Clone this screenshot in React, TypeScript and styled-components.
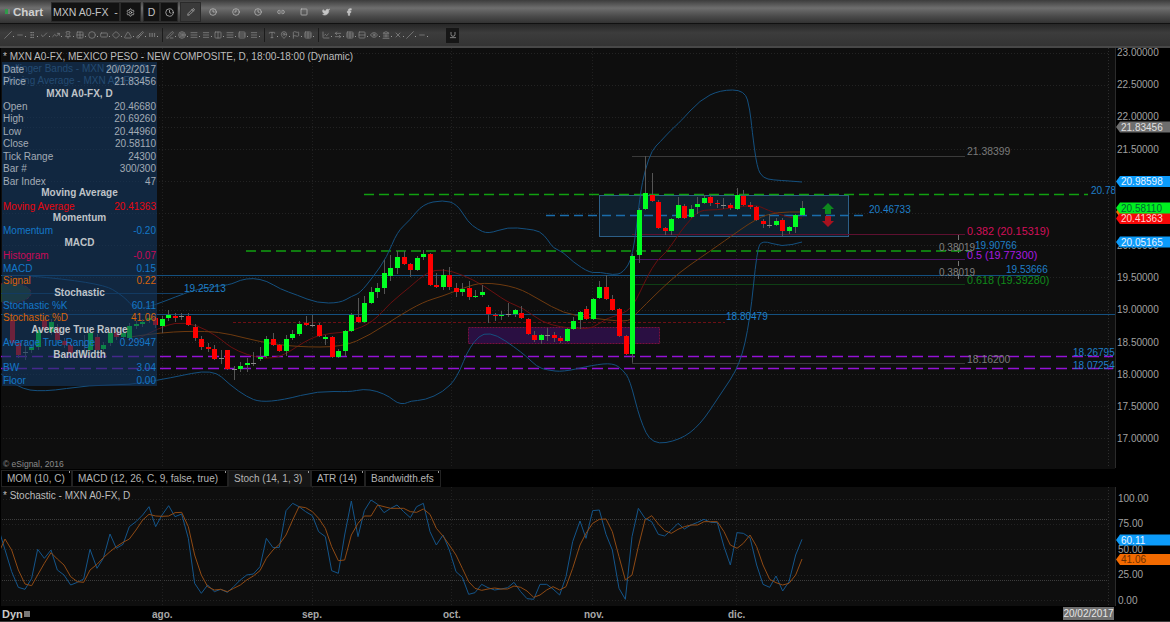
import React from "react";
import styled, { createGlobalStyle } from "styled-components";
import {
  Clock,
  Pencil,
  Settings,
  Clock3,
  Clock9,
  Link2,
  Square,
  Twitter,
  Facebook,
  Slash,
  Minus,
  Check,
  TrendingUp,
  Pin,
  Grid2x2,
  Circle,
  RectangleHorizontal,
  Diamond,
  Triangle,
  Brush,
  GripHorizontal,
  Target,
  AlignJustify,
  Menu,
  Columns2,
  Rows3,
  Type,
  MapPin,
  Flag,
  ChartLine,
  ArrowLeftRight,
  Table,
  Rows2,
  Eye,
  Landmark,
  X,
  PenLine,
  Underline,
  GripVertical,
} from "lucide-react";

const GlobalStyle = createGlobalStyle`
  html, body {
    margin: 0;
    padding: 0;
    background: #000;
  }
  body {
    font-family: "Liberation Sans", Arial, sans-serif;
  }
`;

const Window = styled.div`
  width: 1170px;
  height: 622px;
  overflow: hidden;
  display: flex;
  flex-direction: column;
  background: #000;
  color: #bbb;
`;

const TitleBar = styled.div`
  height: 23px;
  flex: none;
  display: flex;
  align-items: center;
  background: linear-gradient(#3c3c3c 0, #6e6e6e 35%, #4b4b4b 70%, #333 100%);
`;

const Led = styled.span`
  width: 3px;
  height: 5px;
  margin: 0 3px 0 5px;
  background: #2f9a4a;
  box-shadow: 2px 0 0 #777;
`;

const AppName = styled.span`
  width: 36px;
  margin-left: 2px;
  font-size: 11.5px;
  font-weight: bold;
  color: #cfcfcf;
`;

const TitleBox = styled.div<{ $w: number; $ml?: number; $light?: boolean }>`
  width: ${(p) => p.$w}px;
  height: 20px;
  flex: none;
  margin: 1px 0 0 ${(p) => p.$ml || 0}px;
  display: flex;
  align-items: center;
  justify-content: center;
  font-size: 10.5px;
  white-space: nowrap;
  color: #c4c4c4;
  background: ${(p) => (p.$light ? "#3a3a3a" : "#121212")};
  border: 1px solid #2a2a2a;
  box-sizing: border-box;
`;

const TitleIcons = styled.div`
  display: flex;
  align-items: center;
  gap: 14.7px;
  margin-left: 8px;
  color: #c6c6c6;
`;

const ToolBar = styled.div`
  height: 22px;
  flex: none;
  display: flex;
  align-items: center;
  padding-left: 4px;
  background: linear-gradient(#262626, #3c3c3c 40%, #333);
  border-top: 1px solid #111;
  border-bottom: 2px solid #484848;
  box-sizing: content-box;
  color: #8e8e8e;
`;

const ToolItem = styled.span`
  width: 12px;
  flex: none;
  display: flex;
  align-items: center;
  &::after {
    content: "";
    width: 1px;
    height: 1px;
    margin: 3px 0 0 1px;
    background: #999;
  }
`;

const ToolSep = styled.span`
  width: 1px;
  height: 14px;
  margin: 0 3px 0 2px;
  flex: none;
  background: #1c1c1c;
`;

const UnderlineBox = styled.span`
  width: 13px;
  height: 15px;
  margin-left: 16px;
  display: flex;
  align-items: center;
  justify-content: center;
  background: #161616;
  color: #bbb;
`;

const ChartRow = styled.div<{ $h: number }>`
  height: ${(p) => p.$h}px;
  flex: none;
  display: flex;
`;

const Pane = styled.div`
  position: relative;
  width: 1114px;
  flex: none;
  margin-left: 1px;
  background: #0e0e0e;
  overflow: hidden;
`;

const ChartSvg = styled.svg`
  position: absolute;
  left: -1px;
  top: 0;
  display: block;
`;

const Axis = styled.svg`
  width: 55px;
  flex: none;
  display: block;
  border-left: 1px solid #2b2b2b;
  box-sizing: content-box;
`;

const PaneTitle = styled.div`
  position: relative;
  padding: 3px 0 0 2px;
  height: 12px;
  line-height: 12px;
  font-size: 10px;
  white-space: nowrap;
  color: #bdbdbd;
`;

const LegendLine = styled.div`
  position: relative;
  padding-left: 2px;
  height: 12px;
  line-height: 12px;
  font-size: 10px;
  white-space: nowrap;
  color: #3f6b90;
`;

const Legend = styled.div`
  padding-top: 0;
`;

const Copyright = styled.div`
  position: absolute;
  left: 2px;
  bottom: 0;
  font-size: 8.5px;
  color: #8a8a8a;
`;

const DataWindow = styled.div`
  position: absolute;
  left: 1px;
  top: 14px;
  width: 155px;
  height: 324px;
  display: grid;
  grid-auto-rows: 12.45px;
  padding: 1px 1px 0;
  box-sizing: border-box;
  background: rgba(20, 55, 95, 0.62);
  font-size: 10px;
`;

const DataRow = styled.div<{ $c?: string }>`
  display: flex;
  justify-content: space-between;
  align-items: center;
  color: ${(p) => p.$c || "#a3abb5"};
  white-space: nowrap;
`;

const DataHead = styled.div`
  text-align: center;
  font-weight: bold;
  line-height: 12.45px;
  color: #bfc3c8;
  white-space: nowrap;
`;

const Tabs = styled.div`
  height: 17px;
  flex: none;
  display: flex;
  margin: 1px 0 0 1px;
`;

const Tab = styled.div<{ $w: number; $active?: boolean }>`
  position: relative;
  width: ${(p) => p.$w}px;
  box-sizing: border-box;
  padding-left: 5px;
  line-height: 15px;
  font-size: 10px;
  white-space: nowrap;
  color: #b4b4b4;
  background: ${(p) => (p.$active ? "#161616" : "#000")};
  border: 1px solid #222;
  border-bottom-color: ${(p) => (p.$active ? "#161616" : "#222")};
  &::after {
    content: "";
    position: absolute;
    right: 1px;
    top: 0;
    width: 1px;
    height: 2px;
    background: #999;
  }
`;

const TimeAxis = styled.div`
  flex: none;
  height: 14px;
  margin-top: 1px;
  display: flex;
  align-items: center;
  position: relative;
  font-size: 10px;
  font-weight: bold;
  color: #a8a8a8;
  border-bottom: 1px solid #3a3a3a;
`;

const Dyn = styled.span`
  margin-left: 2px;
  font-size: 11px;
  color: #c8c8c8;
`;

const DynMark = styled.span`
  width: 6px;
  height: 6px;
  margin-left: 1px;
  background: #777;
`;

const Month = styled.span<{ $x: number }>`
  position: absolute;
  left: ${(p) => p.$x}px;
`;

const DateTag = styled.span`
  position: absolute;
  left: 1063px;
  top: 0;
  width: 51px;
  height: 13px;
  line-height: 13px;
  text-align: center;
  font-size: 10px;
  font-weight: normal;
  color: #e6e6e6;
  background: #6f6f6f;
`;

const T = styled.text<{ $c: string; $s?: number; $b?: boolean }>`
  font-family: "Liberation Sans", Arial, sans-serif;
  font-size: ${(p) => p.$s || 10}px;
  font-weight: ${(p) => (p.$b ? "bold" : "normal")};
  fill: ${(p) => p.$c};
`;

// [kind, top, bottom, wickTop, wickBottom], one entry per day, 6.53px apart
type Candle = [string, number, number, number?, number?];
const candles: Candle[] = [
  ["r", 320, 343], ["r", 343, 355], ["d", 352, 353, 340, 360], ["g", 347, 350], ["g", 330, 347], ["r", 320, 330],
  ["g", 322, 332], ["r", 327, 340], ["r", 341, 345], ["r", 345, 353], ["d", 352, 353], ["d", 345, 346, 335, 355],
  ["g", 333, 350], ["r", 337, 350], ["g", 345, 349], ["g", 333, 343], ["r", 332, 337], ["g", 333, 337],
  ["g", 326, 338], ["g", 324, 326], ["g", 322, 324], ["g", 318, 320], ["r", 318, 325], ["g", 319, 326, 316, 333],
  ["g", 315, 318, 310, 321], ["r", 316, 318, 313, 322], ["d", 316, 317, 313, 320], ["r", 316, 325, 313, 326], ["r", 327, 338], ["r", 339, 347],
  ["r", 347, 349, 343, 352], ["r", 349, 359, 345, 360], ["d", 358, 359, 350, 364], ["r", 350, 369, 350, 370], ["d", 369, 370, 366, 380], ["g", 366, 369, 362, 372],
  ["g", 363, 365, 358, 372], ["d", 363, 364, 352, 366], ["g", 357, 359, 347, 361], ["g", 339, 356, 336, 358], ["r", 339, 345, 333, 346], ["r", 345, 351, 344, 352],
  ["g", 339, 351, 335, 356], ["g", 334, 338, 330, 340], ["g", 324, 334, 321, 336], ["r", 323, 325, 316, 326], ["d", 325, 326, 315, 327], ["r", 325, 336, 323, 337],
  ["g", 337, 339, 335, 345], ["r", 337, 357, 336, 358], ["g", 351, 357, 349, 358], ["g", 331, 351, 330, 356], ["g", 315, 331, 313, 332], ["r", 317, 322, 298, 323],
  ["g", 303, 322, 296, 323], ["g", 292, 303, 287, 304], ["g", 288, 292, 283, 298], ["g", 273, 288, 260, 294], ["g", 268, 276, 255, 281], ["g", 257, 268, 251, 274],
  ["r", 257, 264, 251, 265], ["r", 264, 270, 263, 277], ["g", 258, 270, 256, 271], ["g", 254, 257, 250, 260], ["r", 254, 285, 253, 286], ["r", 285, 287, 273, 288],
  ["g", 275, 287, 269, 290], ["r", 275, 287, 267, 290], ["r", 288, 292, 283, 297], ["g", 289, 292, 283, 296], ["r", 288, 297, 281, 300], ["g", 296, 297, 290, 298],
  ["g", 292, 295, 285, 297], ["r", 307, 314, 305, 323], ["r", 315, 316, 313, 321], ["g", 315, 316, 311, 320], ["d", 314, 315, 303, 317], ["g", 310, 314, 309, 317],
  ["r", 313, 318, 306, 319], ["r", 319, 334, 318, 335], ["r", 335, 340, 331, 342], ["g", 335, 340, 334, 344], ["d", 335, 336, 328, 341], ["r", 335, 338, 332, 342],
  ["r", 338, 341, 336, 343], ["g", 329, 341, 328, 342], ["g", 321, 329, 317, 330], ["g", 312, 320, 311, 329], ["r", 309, 319, 306, 320], ["g", 299, 319, 298, 320],
  ["g", 287, 298, 281, 299], ["r", 287, 299, 275, 300], ["r", 299, 310, 295, 311], ["r", 309, 336, 308, 337], ["r", 336, 354, 335, 355], ["g", 256, 354, 254, 362],
  ["g", 210, 255, 208, 263], ["g", 193, 209, 156, 210], ["r", 195, 201, 173, 202], ["r", 202, 228, 200, 229], ["r", 228, 231, 227, 235], ["g", 219, 231, 218, 235],
  ["g", 205, 218, 197, 219], ["r", 206, 218, 204, 219], ["g", 209, 217, 205, 218], ["g", 204, 207, 197, 214], ["g", 198, 203, 195, 204], ["r", 197, 203, 195, 206],
  ["r", 203, 204, 200, 208], ["d", 205, 206, 198, 209], ["r", 205, 208, 203, 210], ["g", 195, 209, 188, 210], ["r", 196, 205, 190, 206], ["r", 205, 207, 202, 209],
  ["r", 207, 220, 206, 221], ["r", 221, 224, 219, 228], ["d", 225, 226, 214, 228], ["g", 221, 225, 218, 226], ["r", 220, 231, 218, 236], ["g", 227, 231, 226, 234],
  ["g", 215, 227, 214, 233], ["g", 208, 215, 201, 216],
];

const pts = (list: number[][]) => list.map((p) => p.join(",")).join(" ");

// rounds the corners of a hand-read line through midpoints
const smooth = (list: number[][]) => {
  let d = `M${list[0][0]} ${list[0][1]}`;
  for (let i = 1; i < list.length - 1; i++) {
    const [x, y] = list[i];
    const [nx, ny] = list[i + 1];
    d += ` Q${x} ${y} ${(x + nx) / 2} ${(y + ny) / 2}`;
  }
  const last = list[list.length - 1];
  return `${d} L${last[0]} ${last[1]}`;
};

const upperBand = [
  [30, 276], [100, 282], [125, 297], [135, 310], [155, 305], [175, 297], [200, 288], [230, 285], [240, 280], [253, 278], [267, 281], [280, 289], [297, 295], [317, 303], [340, 303], [352, 296], [360, 293], [373, 277], [387, 257], [397, 232], [410, 220], [423, 204], [443, 200], [457, 204], [468, 222], [477, 229], [488, 234], [508, 227], [527, 229], [540, 231], [548, 240], [553, 248], [563, 252], [573, 262], [590, 273], [600, 272], [613, 275], [623, 273], [633, 257], [640, 195], [645, 170], [652, 150], [660, 142], [671, 130], [680, 122], [700, 100], [720, 90], [745, 90], [750, 110], [752, 130], [757, 168], [763, 178], [773, 180], [790, 181], [802, 182],
];
const lowerBand = [
  [0, 373], [17, 388], [43, 392], [90, 385], [130, 385], [170, 378], [213, 369], [230, 385], [247, 397], [260, 402], [283, 400], [318, 391], [350, 392], [363, 389], [377, 391], [390, 397], [397, 403], [405, 404], [410, 401], [425, 400], [443, 392], [457, 378], [470, 345], [488, 329], [523, 353], [537, 367], [547, 370], [563, 372], [593, 365], [613, 363], [623, 370], [630, 380], [640, 420], [652, 445], [680, 440], [700, 425], [720, 395], [740, 365], [750, 320], [757, 250], [762, 240], [782, 247], [802, 242],
];
const maLine = [
  [130, 343], [163, 325], [187, 322], [207, 330], [222, 340], [230, 347], [247, 355], [267, 359], [283, 356], [310, 338], [330, 333], [350, 332], [373, 322], [390, 303], [410, 287], [427, 272], [443, 269], [463, 275], [483, 285], [507, 302], [523, 308], [542, 322], [560, 327], [580, 329], [593, 328], [607, 318], [620, 315], [633, 307], [647, 277], [657, 260], [667, 252], [680, 232], [690, 220], [700, 210], [717, 210], [737, 207], [757, 205], [767, 210], [790, 218], [802, 218],
];
const slowLine = [
  [130, 337], [163, 332], [207, 331], [230, 334], [260, 342], [297, 347], [343, 347], [370, 335], [397, 317], [423, 302], [443, 296], [463, 288], [483, 282], [517, 287], [540, 300], [563, 313], [590, 318], [627, 322], [633, 317], [660, 290], [680, 272], [700, 258], [723, 242], [757, 218], [777, 212], [802, 212],
];

// stochastic traces, read off in two stretches
const fromLeft = (l: number[][]) => l.map(([x, y]) => [x / 3, 455 + y / 3]);
const fromRight = (l: number[][]) => l.map(([x, y]) => [450 + x / 3, 490 + y / 3]);
const stochK = [
  ...fromLeft([[0, 235], [35, 350], [55, 397], [75, 403], [95, 370], [113, 283], [133, 310], [153, 285], [172, 345], [192, 360], [212, 390], [232, 382], [251, 372], [270, 283], [291, 340], [310, 310], [330, 237], [349, 280], [369, 268], [388, 215], [408, 200], [428, 180], [447, 155], [467, 215], [486, 180], [506, 152], [525, 185], [545, 177], [565, 250], [584, 385], [604, 415], [623, 390], [643, 410], [662, 403], [682, 412], [701, 395], [721, 375], [740, 360], [760, 357], [780, 335], [799, 250], [819, 278], [838, 277], [858, 167], [878, 145], [897, 155], [917, 170], [937, 182], [956, 230], [976, 245], [995, 347], [1015, 355], [1034, 240], [1054, 138], [1074, 245], [1093, 167], [1113, 135], [1133, 148], [1152, 173], [1172, 160], [1191, 150], [1211, 170], [1231, 188], [1250, 155], [1270, 145], [1290, 230], [1309, 270], [1329, 240], [1348, 285], [1368, 350]]),
  ...fromRight([[18, 245], [37, 262], [56, 313], [75, 308], [95, 283], [114, 293], [134, 300], [153, 297], [173, 293], [192, 277], [212, 305], [231, 326], [251, 328], [270, 283], [290, 283], [309, 297], [329, 315], [348, 260], [368, 155], [390, 93], [408, 145], [428, 62], [448, 60], [468, 133], [487, 180], [507, 295], [526, 328], [546, 140], [565, 55], [585, 85], [605, 95], [625, 133], [644, 138], [664, 120], [684, 100], [703, 117], [723, 105], [743, 97], [762, 88], [782, 97], [802, 98], [822, 170], [841, 225], [861, 128], [880, 130], [900, 143], [920, 225], [939, 283], [959, 292], [978, 258], [998, 303], [1017, 275], [1037, 195], [1056, 148]]),
];
const stochD = [
  ...fromLeft([[0, 285], [15, 252], [35, 285], [55, 345], [75, 387], [95, 392], [113, 360], [133, 325], [153, 293], [172, 312], [192, 330], [212, 365], [232, 380], [251, 382], [270, 345], [291, 328], [310, 308], [330, 290], [349, 275], [369, 262], [388, 252], [408, 225], [428, 195], [447, 178], [467, 183], [486, 184], [506, 183], [525, 173], [545, 172], [565, 215], [584, 300], [604, 360], [623, 395], [643, 405], [662, 403], [682, 410], [701, 400], [721, 390], [740, 375], [760, 363], [780, 347], [799, 310], [819, 285], [838, 268], [858, 240], [878, 195], [897, 155], [917, 158], [937, 170], [956, 190], [976, 220], [995, 275], [1015, 317], [1034, 315], [1054, 240], [1074, 205], [1093, 183], [1113, 183], [1133, 150], [1152, 155], [1172, 160], [1191, 160], [1211, 160], [1231, 170], [1250, 172], [1270, 162], [1290, 178], [1309, 220], [1329, 243], [1348, 270], [1368, 300]]),
  ...fromRight([[18, 195], [37, 235], [56, 275], [75, 295], [95, 301], [114, 297], [134, 294], [153, 297], [173, 297], [192, 288], [212, 292], [231, 303], [251, 322], [270, 315], [290, 300], [309, 290], [329, 300], [348, 290], [368, 235], [390, 165], [408, 130], [428, 100], [448, 88], [468, 87], [487, 125], [507, 200], [526, 270], [546, 255], [565, 170], [585, 90], [605, 77], [625, 102], [644, 122], [664, 130], [684, 118], [703, 110], [723, 105], [743, 105], [762, 95], [782, 95], [802, 95], [822, 125], [841, 165], [861, 175], [880, 160], [900, 135], [920, 170], [939, 225], [959, 268], [978, 278], [998, 285], [1017, 280], [1037, 255], [1056, 207]]),
];

const gridY = [53, 85, 117, 127, 149, 181, 213, 245, 277, 310, 342, 374, 406, 438];
const monthX = [162, 312, 451, 592, 736];

const Hair = ({ x1, x2, y, c, dash, w = 1 }: { x1: number; x2: number; y: number; c: string; dash?: string; w?: number }) => (
  <line x1={x1} x2={x2} y1={y} y2={y} stroke={c} strokeDasharray={dash} strokeWidth={w} />
);

const MainChart = () => (
  <ChartSvg width={1115} height={420} viewBox="0 48 1115 420">
    {gridY.map((y) => (
      <Hair key={y} x1={0} x2={1108} y={y + 0.5} c="#232323" dash="1 2" />
    ))}
    {monthX.map((x) => (
      <line key={x} x1={x + 0.5} x2={x + 0.5} y1={48} y2={468} stroke="#202020" strokeDasharray="1 2" />
    ))}
    <line x1={1108.5} x2={1108.5} y1={48} y2={468} stroke="#2e2e2e" strokeDasharray="1 2" />

    <ellipse cx={10} cy={293} rx={21} ry={10} fill="#26401f" stroke="#8a1a30" strokeDasharray="3 2" />

    <rect x={468.5} y={327.5} width={191} height={16} fill="#2a0f42" stroke="#7a1040" strokeDasharray="2 1" />
    <rect x={599.5} y={195.5} width={249} height={41} fill="#10202e" stroke="#2c5f88" />

    <Hair x1={0} x2={183} y={293.5} c="#123f66" />
    <Hair x1={0} x2={1040} y={275.5} c="#14507f" />
    <Hair x1={0} x2={1115} y={314.5} c="#14507f" />
    <Hair x1={233} x2={725} y={322.5} c="#6c0f14" dash="3 2" />
    <Hair x1={632} x2={965} y={156.5} c="#3a3a3a" />
    <Hair x1={632} x2={965} y={363.5} c="#3a3a3a" />
    <line x1={632.5} x2={632.5} y1={354} y2={363} stroke="#444" />
    <Hair x1={632} x2={965} y={234.5} c="#5e1030" />
    <Hair x1={632} x2={965} y={259.5} c="#4b1464" />
    <Hair x1={632} x2={965} y={284.5} c="#0e3f14" />
    <line x1={958.5} x2={958.5} y1={235} y2={285} stroke="#777" strokeDasharray="5 8" />
    <Hair x1={546} x2={867} y={215.5} c="#1a6cab" dash="9 5" w={1.5} />
    <Hair x1={364} x2={1088} y={194.5} c="#10a010" dash="10 5" w={1.4} />
    <Hair x1={246} x2={972} y={251} c="#10a010" dash="10 5" w={1.4} />
    <Hair x1={0} x2={1113} y={356.5} c="#9412d6" dash="11 5" w={1.6} />
    <Hair x1={0} x2={1113} y={368.5} c="#9412d6" dash="11 5" w={1.6} />

    <path d={smooth(upperBand)} fill="none" stroke="#14507f" />
    <path d={smooth(lowerBand)} fill="none" stroke="#14507f" />
    <path d={smooth(maLine)} fill="none" stroke="#6a1010" />
    <path d={smooth(slowLine)} fill="none" stroke="#6e3a0e" />

    {candles.map(([kind, top, bottom, wt, wb], i) => {
      const x = Math.round(11.7 + i * 6.53);
      const fill = kind === "r" ? "#ff0000" : kind === "g" ? "#00ff21" : "#8a8a8a";
      return (
        <g key={i}>
          <line x1={x + 0.5} x2={x + 0.5} y1={wt ?? top - 3} y2={wb ?? bottom + 3} stroke="#555" />
          <rect x={x - 2} y={top} width={5} height={bottom - top} fill={fill} />
        </g>
      );
    })}

    <polygon points="828,203 834,209 831,209 831,214 825,214 825,209 822,209" fill="#0e8a1e" />
    <polygon points="825,216 831,216 831,221 834,221 828,227 822,221 825,221" fill="#a8121e" />

    <T x={184} y={292} $c="#1f7fc8">19.25213</T>
    <T x={726} y={320} $c="#1f7fc8">18.80479</T>
    <T x={869} y={213} $c="#1f7fc8">20.46733</T>
    <T x={1091} y={194} $c="#1f7fc8">20.78</T>
    <T x={967} y={155} $c="#7a7a7a" $s={10.4}>21.38399</T>
    <T x={967} y={235} $c="#d2105a" $s={10.8}>0.382 (20.15319)</T>
    <T x={939} y={251} $c="#808080">0.38019</T>
    <T x={975} y={249} $c="#1f7fc8">19.90766</T>
    <T x={967} y={259} $c="#a81ae0" $s={10.8}>0.5 (19.77300)</T>
    <T x={939} y={276} $c="#808080">0.38019</T>
    <T x={1006} y={273} $c="#1f7fc8">19.53666</T>
    <T x={967} y={284} $c="#108a1a" $s={10.8}>0.618 (19.39280)</T>
    <T x={967} y={363} $c="#7a7a7a" $s={10.4}>18.16200</T>
    <T x={1073} y={356} $c="#1f7fc8">18.26795</T>
    <T x={1073} y={369} $c="#1f7fc8">18.07254</T>
  </ChartSvg>
);

const Tag = ({ y, bg, color, text, h = 11 }: { y: number; bg: string; color: string; text: string; h?: number }) => (
  <g>
    <polygon points={`0,${y} 4,${y - h / 2} 55,${y - h / 2} 55,${y + h / 2} 4,${y + h / 2}`} fill={bg} />
    <T x={5} y={y + 3.6} $c={color}>{text}</T>
  </g>
);

const mainTicks = [
  ["23.00000", 56], ["22.50000", 88], ["22.00000", 120], ["21.50000", 153], ["20.00000", 249], ["19.50000", 281],
  ["19.00000", 313], ["18.50000", 346], ["18.00000", 378], ["17.50000", 410], ["17.00000", 442],
] as const;

const MainAxis = () => (
  <Axis width={55} height={420} viewBox="0 48 55 420">
    {mainTicks.map(([label, y]) => (
      <T key={label} x={1} y={y} $c="#a0a0a0">{label}</T>
    ))}
    <Tag y={127} bg="#6e6e6e" color="#e0e0e0" text="21.83456" />
    <Tag y={181.5} bg="#0c9bfa" color="#e8f4ff" text="20.98598" />
    <Tag y={212} bg="#f26a00" color="#7a3000" text="20.51002" />
    <Tag y={218.5} bg="#f80808" color="#ffd0d0" text="20.41363" />
    <Tag y={208} bg="#00f020" color="#063" text="20.58110" />
    <Tag y={242} bg="#0c9bfa" color="#e8f4ff" text="20.05165" />
  </Axis>
);

const lowerTicks = [["100.00", 502], ["75.00", 527], ["50.00", 553], ["25.00", 578], ["0.00", 604]] as const;

const LowerAxis = () => (
  <Axis width={55} height={119} viewBox="0 487 55 119">
    {lowerTicks.map(([label, y]) => (
      <T key={label} x={2} y={y} $c="#a0a0a0">{label}</T>
    ))}
    <Tag y={540} bg="#0c9bfa" color="#e8f4ff" text="60.11" />
    <Tag y={559.5} bg="#f26a00" color="#6e3000" text="41.06" />
  </Axis>
);

const LowerChart = () => (
  <ChartSvg width={1115} height={119} viewBox="0 487 1115 119">
    {[499, 524, 549, 575, 600].map((y) => (
      <Hair key={y} x1={0} x2={1108} y={y + 0.5} c="#222" dash="1 2" />
    ))}
    {[519, 580].map((y) => (
      <Hair key={y} x1={0} x2={1108} y={y + 0.5} c="#3d3d3d" dash="1 1" />
    ))}
    {monthX.map((x) => (
      <line key={x} x1={x + 0.5} x2={x + 0.5} y1={487} y2={606} stroke="#202020" strokeDasharray="1 2" />
    ))}
    <line x1={1108.5} x2={1108.5} y1={487} y2={606} stroke="#2e2e2e" strokeDasharray="1 2" />
    <polyline points={pts(stochK)} fill="none" stroke="#14558a" />
    <polyline points={pts(stochD)} fill="none" stroke="#8f4a14" />
  </ChartSvg>
);

const dataRows: ([string] | [string, string, string?])[] = [
  ["Date", "20/02/2017"],
  ["Price", "21.83456"],
  ["MXN A0-FX, D"],
  ["Open", "20.46680"],
  ["High", "20.69260"],
  ["Low", "20.44960"],
  ["Close", "20.58110"],
  ["Tick Range", "24300"],
  ["Bar #", "300/300"],
  ["Bar Index", "47"],
  ["Moving Average"],
  ["Moving Average", "20.41363", "#e8060e"],
  ["Momentum"],
  ["Momentum", "-0.20", "#1478c8"],
  ["MACD"],
  ["Histogram", "-0.07", "#c80a58"],
  ["MACD", "0.15", "#1478c8"],
  ["Signal", "0.22", "#d8640a"],
  ["Stochastic"],
  ["Stochastic %K", "60.11", "#1478c8"],
  ["Stochastic %D", "41.06", "#d8640a"],
  ["Average True Range"],
  ["Average True Range", "0.29947", "#1478c8"],
  ["BandWidth"],
  ["BW", "3.04", "#1478c8"],
  ["Floor", "0.00", "#1478c8"],
];

const toolGroups = [
  [Slash, Minus, GripVertical, Check, TrendingUp, Pin, Grid2x2, Circle, RectangleHorizontal, Diamond, Triangle, Brush, GripHorizontal],
  [PenLine, Target, AlignJustify, Menu, Columns2, AlignJustify, Rows3, Menu],
  [Type, MapPin, Flag, Table],
  [ChartLine, ArrowLeftRight, Table, Rows2, Eye, Landmark, X, Slash, Minus],
];

const App: React.FC = () => {
  return (
    <Window>
      <GlobalStyle />
      <TitleBar>
        <Led />
        <AppName>Chart</AppName>
        <TitleBox $w={69} $ml={2}>MXN A0-FX &nbsp;-</TitleBox>
        <TitleBox $w={21}><Settings size={9} /></TitleBox>
        <TitleBox $w={17} $ml={2}>D</TitleBox>
        <TitleBox $w={18}><Clock size={9} /></TitleBox>
        <TitleBox $w={21} $ml={2} $light><Pencil size={8} /></TitleBox>
        <TitleIcons>
          <Clock3 size={8} />
          <Clock9 size={8} />
          <Clock size={8} />
          <Link2 size={8} />
          <Square size={8} />
          <Twitter size={8} fill="currentColor" />
          <Facebook size={8} fill="currentColor" />
        </TitleIcons>
      </TitleBar>

      <ToolBar>
        {toolGroups.map((group, g) => (
          <React.Fragment key={g}>
            {g > 0 && <ToolSep />}
            {group.map((Icon, i) => (
              <ToolItem key={i}>
                <Icon size={8} />
              </ToolItem>
            ))}
          </React.Fragment>
        ))}
        <UnderlineBox><Underline size={8} /></UnderlineBox>
      </ToolBar>

      <ChartRow $h={421}>
        <Pane>
          <MainChart />
          <PaneTitle>* MXN A0-FX, MEXICO PESO - NEW COMPOSITE, D, 18:00-18:00 (Dynamic)</PaneTitle>
          <Legend>
            <LegendLine>Bollinger Bands - MXN A0-FX, D</LegendLine>
            <LegendLine>Moving Average - MXN A0-FX, D</LegendLine>
          </Legend>
          <DataWindow>
            {dataRows.map(([label, value, color], i) =>
              value ? (
                <DataRow key={i} $c={color}>
                  <span>{label}</span>
                  <span>{value}</span>
                </DataRow>
              ) : (
                <DataHead key={i}>{label}</DataHead>
              )
            )}
          </DataWindow>
          <Copyright>© eSignal, 2016</Copyright>
        </Pane>
        <MainAxis />
      </ChartRow>

      <Tabs>
        <Tab $w={71}>MOM (10, C)</Tab>
        <Tab $w={156}>MACD (12, 26, C, 9, false, true)</Tab>
        <Tab $w={83} $active>Stoch (14, 1, 3)</Tab>
        <Tab $w={54}>ATR (14)</Tab>
        <Tab $w={76}>Bandwidth.efs</Tab>
      </Tabs>

      <ChartRow $h={119}>
        <Pane>
          <LowerChart />
          <PaneTitle>* Stochastic - MXN A0-FX, D</PaneTitle>
        </Pane>
        <LowerAxis />
      </ChartRow>

      <TimeAxis>
        <Dyn>Dyn</Dyn>
        <DynMark />
        <Month $x={152}>ago.</Month>
        <Month $x={302}>sep.</Month>
        <Month $x={443}>oct.</Month>
        <Month $x={584}>nov.</Month>
        <Month $x={728}>dic.</Month>
        <DateTag>20/02/2017</DateTag>
      </TimeAxis>
    </Window>
  );
};

export default App;
